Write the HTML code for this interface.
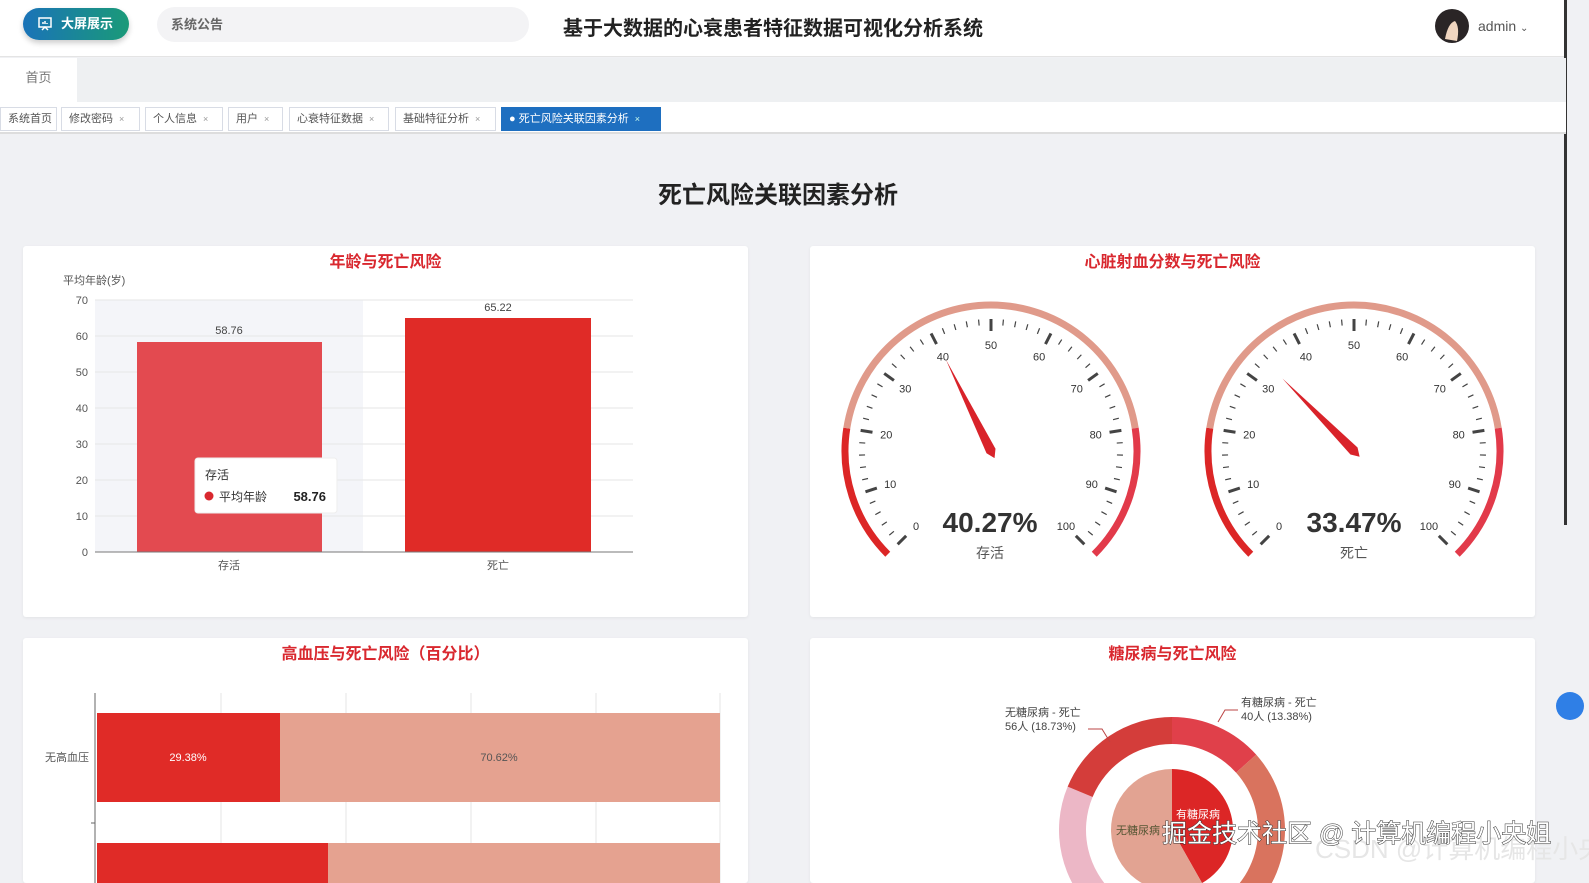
<!DOCTYPE html>
<html style="width:1589px;height:883px;overflow:hidden"><head><meta charset="utf-8">
<style>
*{margin:0;padding:0;box-sizing:border-box}
body{width:1589px;height:883px;overflow:hidden;background:#f0f1f4;font-family:"Liberation Sans","Noto Sans CJK SC",sans-serif;position:relative;color:#333}
.abs{position:absolute}
.hdr{left:0;top:0;width:1566px;height:57px;background:#fff;border-bottom:1px solid #e4e4e4}
.btn{left:23px;top:8px;width:106px;height:32px;border-radius:16px;background:linear-gradient(90deg,#1a73b8,#1a9a78);color:#fff;font-size:13px;font-weight:bold;line-height:32px;padding-left:38px;box-shadow:0 3px 6px rgba(0,0,0,.2)}
.notice{left:157px;top:7px;width:372px;height:35px;border-radius:18px;background:#f3f3f5;font-size:13px;color:#666;line-height:35px;padding-left:14px;font-weight:bold}
.title{left:563px;top:12px;font-size:20px;font-weight:bold;color:#222}
.sub{left:0;top:58px;width:1566px;height:44px;background:#eef0f2}
.home{left:0;top:58px;width:77px;height:44px;background:#fff;font-size:13px;color:#777;line-height:40px;text-align:center}
.tabs{left:0;top:102px;width:1566px;height:32px;background:#fff;border-bottom:2px solid #ddd}
.tab{position:absolute;top:5px;height:24px;border:1px solid #d8dce5;font-size:11px;color:#555;line-height:22px;padding-left:7px;background:#fff}
.tab i{font-style:normal;color:#999;font-size:9px;margin-left:6px}
.card{background:#fff;border-radius:3px;box-shadow:0 1px 3px rgba(0,0,0,.06)}
.ct{position:absolute;left:0;right:0;text-align:center;top:2px;font-size:16px;font-weight:bold;color:#d9282f}
</style></head><body>
<div class="abs hdr"></div>
<div class="abs btn">大屏展示</div>
<svg class="abs" style="left:37px;top:16px" width="16" height="16" viewBox="0 0 16 16" fill="none" stroke="#fff" stroke-width="1.5"><rect x="2" y="2" width="12" height="9"/><path d="M5 14l3-3 3 3M6 8V6M8 8V5M10 8V7"/></svg>
<div class="abs notice">系统公告</div>
<div class="abs title">基于大数据的心衰患者特征数据可视化分析系统</div>
<svg class="abs" style="left:1435px;top:9px" width="34" height="34"><circle cx="17" cy="17" r="17" fill="#2a2526"/><path d="M10 30 Q13 14 20 12 Q25 18 22 32Z" fill="#f0d6c0"/></svg>
<div class="abs" style="left:1478px;top:18px;font-size:14px;color:#555">admin <span style="font-size:10px">&#8964;</span></div>
<div class="abs" style="left:1564px;top:0;width:3px;height:525px;background:#333"></div>
<div class="abs sub"></div>
<div class="abs home">首页</div>
<div class="abs tabs">
<div class="tab" style="left:0;width:57px">系统首页</div>
<div class="tab" style="left:61px;width:79px">修改密码<i>×</i></div>
<div class="tab" style="left:145px;width:78px">个人信息<i>×</i></div>
<div class="tab" style="left:228px;width:55px">用户<i>×</i></div>
<div class="tab" style="left:289px;width:100px">心衰特征数据<i>×</i></div>
<div class="tab" style="left:395px;width:101px">基础特征分析<i>×</i></div>
<div class="tab" style="left:501px;width:160px;background:#1e6fc0;border-color:#1e6fc0;color:#fff">● 死亡风险关联因素分析<i style="color:#cfe">×</i></div>
</div>
<div class="abs" style="left:0;top:175px;width:1556px;text-align:center;font-size:24px;font-weight:bold;color:#222">死亡风险关联因素分析</div>

<div class="abs card" style="left:23px;top:246px;width:725px;height:371px"><div class="ct">年龄与死亡风险</div></div>
<div class="abs card" style="left:810px;top:246px;width:725px;height:371px"><div class="ct">心脏射血分数与死亡风险</div></div>
<div class="abs card" style="left:23px;top:638px;width:725px;height:245px"><div class="ct">高血压与死亡风险（百分比）</div></div>
<div class="abs card" style="left:810px;top:638px;width:725px;height:245px"><div class="ct">糖尿病与死亡风险</div></div>

<svg class="abs" style="left:0;top:0" width="1589" height="883" id="s" font-family="Liberation Sans,Noto Sans CJK SC,sans-serif">
<text x="63" y="284" font-size="11" fill="#555">平均年龄(岁)</text>
<rect x="95" y="300" width="268" height="252" fill="#f4f5f9"/>
<g id="grid"></g>
<rect x="137" y="342" width="185" height="210" fill="#e34a50"/>
<rect x="405" y="318" width="186" height="234" fill="#e02b27"/>
<text x="229" y="334" font-size="11" text-anchor="middle" fill="#444">58.76</text>
<text x="498" y="311" font-size="11" text-anchor="middle" fill="#444">65.22</text>
<line x1="95" y1="552" x2="633" y2="552" stroke="#777"/>
<text x="229" y="569" font-size="11" text-anchor="middle" fill="#555">存活</text>
<text x="498" y="569" font-size="11" text-anchor="middle" fill="#555">死亡</text>
<rect x="195" y="458" width="142" height="55" rx="3" fill="#fff" stroke="#eee"/>
<text x="205" y="479" font-size="12" fill="#333">存活</text>
<circle cx="209" cy="496" r="4.5" fill="#d9282f"/>
<text x="219" y="501" font-size="12" fill="#333">平均年龄</text>
<text x="326" y="501" font-size="13" font-weight="bold" text-anchor="end" fill="#222">58.76</text>
<g id="g1"></g><g id="g2"></g>
<text x="990" y="532" font-size="28" font-weight="bold" text-anchor="middle" fill="#333">40.27%</text>
<text x="990" y="558" font-size="14" text-anchor="middle" fill="#555">存活</text>
<text x="1354" y="532" font-size="28" font-weight="bold" text-anchor="middle" fill="#333">33.47%</text>
<text x="1354" y="558" font-size="14" text-anchor="middle" fill="#555">死亡</text>
<g stroke="#e6e6e6"><line x1="221" y1="693" x2="221" y2="883"/><line x1="346" y1="693" x2="346" y2="883"/><line x1="471" y1="693" x2="471" y2="883"/><line x1="596" y1="693" x2="596" y2="883"/><line x1="720" y1="693" x2="720" y2="883"/></g>
<line x1="95" y1="693" x2="95" y2="883" stroke="#666"/>
<line x1="91" y1="823" x2="95" y2="823" stroke="#666"/>
<rect x="97" y="713" width="183" height="89" fill="#e02b27"/>
<rect x="280" y="713" width="440" height="89" fill="#e5a290"/>
<rect x="97" y="843" width="231" height="40" fill="#e02b27"/>
<rect x="328" y="843" width="392" height="40" fill="#e5a290"/>
<text x="188" y="761" font-size="11" fill="#fff" text-anchor="middle">29.38%</text>
<text x="499" y="761" font-size="11" fill="#555" text-anchor="middle">70.62%</text>
<text x="89" y="761" font-size="11" fill="#555" text-anchor="end">无高血压</text>
<g id="pie"></g>
<text x="1005" y="716" font-size="11" fill="#444">无糖尿病 - 死亡</text>
<text x="1005" y="730" font-size="11" fill="#444">56人 (18.73%)</text>
<polyline points="1088,729 1102,729 1110,742" fill="none" stroke="#b44"/>
<text x="1241" y="706" font-size="11" fill="#444">有糖尿病 - 死亡</text>
<text x="1241" y="720" font-size="11" fill="#444">40人 (13.38%)</text>
<polyline points="1238,710 1225,710 1218,722" fill="none" stroke="#b44"/>
<text x="1176" y="818" font-size="11" fill="#fff">有糖尿病</text>
<text x="1116" y="834" font-size="11" fill="#553">无糖尿病</text>
<text x="1315" y="858" font-size="26" fill="#e6e6e6">CSDN @计算机编程小央姐</text>
<text x="1162" y="842" font-size="25" fill="#fff" stroke="#333" stroke-width="1" paint-order="stroke">掘金技术社区 @ 计算机编程小央姐</text>
<circle cx="1570" cy="706" r="14" fill="#2f7fe6"/>
</svg>
<script>
var NS="http://www.w3.org/2000/svg";
function el(p,t,a,txt){var e=document.createElementNS(NS,t);for(var k in a)e.setAttribute(k,a[k]);if(txt!=null)e.textContent=txt;p.appendChild(e);return e;}
var g=document.getElementById('grid');
for(var v=0;v<=70;v+=10){var y=552-v*3.6;if(v>0)el(g,'line',{x1:95,x2:633,y1:y,y2:y,stroke:'#e6e6e6'});el(g,'text',{x:88,y:y+4,'font-size':11,'text-anchor':'end',fill:'#555'},v);}
function P(cx,cy,r,deg){var a=deg*Math.PI/180;return [cx+r*Math.cos(a),cy-r*Math.sin(a)];}
function arc(cx,cy,r,a1,a2){var p=P(cx,cy,r,a1),q=P(cx,cy,r,a2);var large=(a1-a2)>180?1:0;return 'M'+p[0]+' '+p[1]+' A'+r+' '+r+' 0 '+large+' 1 '+q[0]+' '+q[1];}
function gauge(id,cx,cy,val){var G=document.getElementById(id),R=146;
function ang(v){return 225-v*2.7;}
el(G,'path',{d:arc(cx,cy,R,ang(0),ang(20)),stroke:'#dc2626','stroke-width':7,fill:'none'});
el(G,'path',{d:arc(cx,cy,R,ang(20),ang(80)),stroke:'#e09a8a','stroke-width':7,fill:'none'});
el(G,'path',{d:arc(cx,cy,R,ang(80),ang(100)),stroke:'#e23a4a','stroke-width':7,fill:'none'});
for(var v=0;v<=100;v+=2){var a=ang(v),maj=v%10==0;var p=P(cx,cy,R-14,a),q=P(cx,cy,R-(maj?26:20),a);
el(G,'line',{x1:p[0],y1:p[1],x2:q[0],y2:q[1],stroke:'#444','stroke-width':maj?3:1.2});
if(maj){var t=P(cx,cy,R-40,a);el(G,'text',{x:t[0],y:t[1]+4,'font-size':11,'text-anchor':'middle',fill:'#333'},v);}}
var a=ang(val),tip=P(cx,cy,102,a),l=P(cx,cy,5,a+90),r=P(cx,cy,5,a-90),b=P(cx,cy,-8,a);
el(G,'path',{d:'M'+tip+' L'+l+' L'+b+' L'+r+'Z',fill:'#d9232a'});}
gauge('g1',991,451,40.27);gauge('g2',1354,451,33.47);
var pie=document.getElementById('pie'),cx=1172,cy=830;
function ring(r1,r2,a1,a2,c){var s=90-a1*3.6,e=90-a2*3.6;var p1=P(cx,cy,r2,s),p2=P(cx,cy,r2,e),p3=P(cx,cy,r1,e),p4=P(cx,cy,r1,s);var lg=(a2-a1)>50?1:0;
var d='M'+p1+' A'+r2+' '+r2+' 0 '+lg+' 1 '+p2+(r1>0?' L'+p3+' A'+r1+' '+r1+' 0 '+lg+' 0 '+p4:' L'+cx+' '+cy)+'Z';el(pie,'path',{d:d,fill:c});}
ring(86,113,0,13.38,'#e0404a');ring(86,113,13.38,41.81,'#d9735e');ring(86,113,41.81,81.27,'#ecb7c6');ring(86,113,81.27,100,'#d43d3a');
ring(0,61,0,41.8,'#dc2626');ring(0,61,41.8,100,'#e2a392');
</script>
</body></html>
